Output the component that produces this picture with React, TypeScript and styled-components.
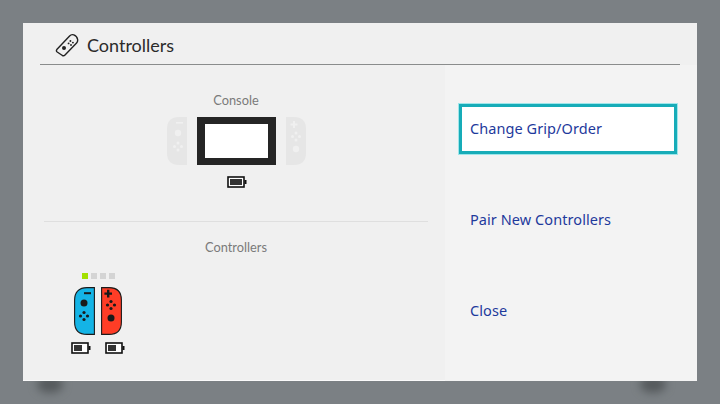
import React from 'react';
import styled, { createGlobalStyle } from 'styled-components';

const Global = createGlobalStyle`
  html, body { margin: 0; padding: 0; width: 720px; height: 404px; overflow: hidden; background: #7b8084; }
  #root { width: 720px; height: 404px; }
`;

const Backdrop = styled.div`
  position: relative;
  box-sizing: border-box;
  width: 720px;
  height: 404px;
  padding: 23px 23px 23px 23px;
  background: #7b8084;
  font-family: "Noto Sans", "Lato", sans-serif;
`;

const ShadowBlob = styled.div<{ $left: number }>`
  position: absolute;
  top: 376px;
  left: ${p => p.$left}px;
  width: 26px;
  height: 17px;
  border-radius: 50%;
  background: #55595c;
  filter: blur(4px);
`;

const Panel = styled.div`
  position: relative;
  display: flex;
  flex-direction: column;
  height: 100%;
  background: #f0f0f0;
  box-shadow: inset 0 -1px 0 #fafafa;
`;

const Header = styled.header`
  box-sizing: border-box;
  display: flex;
  align-items: center;
  gap: 8px;
  height: 42px;
  margin: 0 17px;
  padding: 2px 0 0 15px;
  border-bottom: 1px solid #8a8c8c;
`;

const Title = styled.h1`
  margin: 0;
  font-family: "Lato", sans-serif;
  font-size: 18px;
  font-weight: 400;
  color: #2b2b2b;
`;

const Body = styled.div`
  flex: 1;
  display: flex;
  min-height: 0;
`;

const LeftPane = styled.section`
  box-sizing: border-box;
  width: 422px;
  padding: 0 17px 0 21px;
  display: flex;
  flex-direction: column;
`;

const ConsoleBlock = styled.div`
  box-sizing: border-box;
  height: 157px;
  padding-top: 27px;
  display: flex;
  flex-direction: column;
  align-items: center;
  border-bottom: 1px solid #dfdfdf;
`;

const Caption = styled.div`
  font-family: "Lato", sans-serif;
  font-size: 12.8px;
  line-height: 16px;
  color: #7a7a7a;
`;

const ConsoleRow = styled.div`
  display: flex;
  align-items: center;
  margin-top: 9px;
  gap: 10px;
`;

const Screen = styled.div`
  box-sizing: border-box;
  width: 79px;
  height: 48px;
  background: #fff;
  border: solid #252525;
  border-width: 7px 8px;
`;

const BatterySlot = styled.div`
  margin: 11px 0 0 2px;
  height: 12px;
  display: flex;
`;

const ControllersBlock = styled.div`
  padding-top: 17px;
  display: flex;
  flex-direction: column;
`;

const CenteredCaption = styled(Caption)`
  text-align: center;
`;

const PlayerGroup = styled.div`
  display: flex;
  flex-direction: column;
  align-items: center;
  width: 64px;
  margin: 18px 0 0 22px;
`;

const Lights = styled.div`
  display: flex;
  gap: 3px;
`;

const Light = styled.span<{ $on?: boolean }>`
  width: 6px;
  height: 6px;
  background: ${p => (p.$on ? '#a2e000' : '#d4d4d4')};
`;

const JoyPair = styled.div`
  display: flex;
  gap: 6px;
  margin-top: 8px;
`;

const BatteryRow = styled.div`
  display: flex;
  gap: 14px;
  margin-top: 7px;
`;

const RightPane = styled.nav`
  box-sizing: border-box;
  flex: 1;
  background: #f3f3f3;
  padding: 39px 20px 1px 14px;
  display: flex;
  flex-direction: column;
  gap: 41px;
`;

const MenuItem = styled.div<{ $focused?: boolean }>`
  box-sizing: border-box;
  height: 50px;
  display: flex;
  align-items: center;
  padding-left: ${p => (p.$focused ? '8px' : '11px')};
  padding-bottom: 2px;
  font-size: 14.5px;
  letter-spacing: 0.07px;
  color: #1e3a9c;
  background: ${p => (p.$focused ? '#fff' : 'transparent')};
  border: ${p => (p.$focused ? '3px solid #17acb8' : 'none')};
  box-shadow: ${p => (p.$focused ? '0 0 0 1px #9fe6ea' : 'none')};
`;

const Battery = ({ level }: { level: number }) => (
  <svg width="20" height="12" viewBox="0 0 20 12">
    <rect x="1" y="1" width="16" height="10" fill="#fff" stroke="#111" strokeWidth="1.6" />
    <rect x="3" y="3" width={level} height="6" fill="#333" />
    <rect x="17.5" y="4" width="2" height="4" fill="#111" />
  </svg>
);

const ControllerIcon = () => (
  <svg width="24" height="24" viewBox="0 0 24 24" fill="none">
    <path d="M1.8 16.6 L14.6 2.9 Q16.4 1 18.8 1.9 Q22 3.2 22.6 6.4 Q23 8.6 21.6 10 L10 22 Q8.8 23.2 7.4 22.5 L2.2 19 Q.9 18 1.8 16.6 Z" stroke="#222" strokeWidth="1.4" strokeLinejoin="round" />
    <circle cx="9" cy="15" r="2" fill="#222" />
    <g fill="#222">
      <circle cx="13.6" cy="10.4" r="0.95" />
      <circle cx="16" cy="12" r="0.95" />
      <circle cx="15.4" cy="8" r="0.95" />
      <circle cx="17.9" cy="9.6" r="0.95" />
    </g>
  </svg>
);

const GhostLeft = () => (
  <svg width="20" height="48" viewBox="0 0 20 48">
    <path d="M20 0 H12 Q0 0 0 12 V36 Q0 48 12 48 H20 Z" fill="#e6e6e6" />
    <rect x="9" y="5" width="7" height="1.6" fill="#f0f0f0" />
    <circle cx="11" cy="16" r="3.2" fill="#f0f0f0" />
    <g fill="#f0f0f0">
      <circle cx="11" cy="26" r="1.5" /><circle cx="11" cy="33" r="1.5" />
      <circle cx="7.5" cy="29.5" r="1.5" /><circle cx="14.5" cy="29.5" r="1.5" />
    </g>
  </svg>
);

const GhostRight = () => (
  <svg width="20" height="48" viewBox="0 0 20 48">
    <path d="M0 0 H8 Q20 0 20 12 V36 Q20 48 8 48 H0 Z" fill="#e6e6e6" />
    <path d="M7 4 h2 v2.5 h2.5 v2 h-2.5 v2.5 h-2 v-2.5 h-2.5 v-2 h2.5 Z" fill="#f0f0f0" />
    <g fill="#f0f0f0">
      <circle cx="10" cy="16" r="1.5" /><circle cx="10" cy="23" r="1.5" />
      <circle cx="6.5" cy="19.5" r="1.5" /><circle cx="13.5" cy="19.5" r="1.5" />
    </g>
    <circle cx="10" cy="32" r="3.2" fill="#f0f0f0" />
  </svg>
);

const JoyLeft = () => (
  <svg width="21" height="48" viewBox="0 0 21 48">
    <path d="M20.4 .6 H13 C5 .6 .6 5 .6 13 V35 C.6 43 5 47.4 13 47.4 H20.4 Z" fill="#14b4e6" stroke="#1a1a1a" strokeWidth="1.1" />
    <rect x="10" y="5.2" width="7" height="2" fill="#1a1a1a" />
    <circle cx="10" cy="16" r="3.5" fill="#1a1a1a" />
    <g fill="#1a1a1a">
      <circle cx="10" cy="25.5" r="1.6" /><circle cx="10" cy="32.5" r="1.6" />
      <circle cx="6.5" cy="29" r="1.6" /><circle cx="13.5" cy="29" r="1.6" />
    </g>
  </svg>
);

const JoyRight = () => (
  <svg width="21" height="48" viewBox="0 0 21 48">
    <path d="M.6 .6 H8 C16 .6 20.4 5 20.4 13 V35 C20.4 43 16 47.4 8 47.4 H.6 Z" fill="#ff3d26" stroke="#1a1a1a" strokeWidth="1.1" />
    <path d="M6 2.8 h2.4 v2.6 h2.6 v2.4 h-2.6 v2.6 h-2.4 v-2.6 h-2.6 v-2.4 h2.6 Z" fill="#1a1a1a" />
    <g fill="#1a1a1a">
      <circle cx="10" cy="14.5" r="1.6" /><circle cx="10" cy="21.5" r="1.6" />
      <circle cx="6.5" cy="18" r="1.6" /><circle cx="13.5" cy="18" r="1.6" />
    </g>
    <circle cx="10" cy="31" r="3.5" fill="#1a1a1a" />
  </svg>
);

export default function App() {
  return (
    <Backdrop>
      <Global />
      <ShadowBlob $left={37} />
      <ShadowBlob $left={640} />
      <Panel>
        <Header>
          <ControllerIcon />
          <Title>Controllers</Title>
        </Header>
        <Body>
          <LeftPane>
            <ConsoleBlock>
              <Caption>Console</Caption>
              <ConsoleRow>
                <GhostLeft />
                <Screen />
                <GhostRight />
              </ConsoleRow>
              <BatterySlot><Battery level={12} /></BatterySlot>
            </ConsoleBlock>
            <ControllersBlock>
              <CenteredCaption>Controllers</CenteredCaption>
              <PlayerGroup>
                <Lights>
                  <Light $on /><Light /><Light /><Light />
                </Lights>
                <JoyPair>
                  <JoyLeft />
                  <JoyRight />
                </JoyPair>
                <BatteryRow>
                  <Battery level={8} />
                  <Battery level={8} />
                </BatteryRow>
              </PlayerGroup>
            </ControllersBlock>
          </LeftPane>
          <RightPane>
            <MenuItem $focused>Change Grip/Order</MenuItem>
            <MenuItem>Pair New Controllers</MenuItem>
            <MenuItem>Close</MenuItem>
          </RightPane>
        </Body>
      </Panel>
    </Backdrop>
  );
}
